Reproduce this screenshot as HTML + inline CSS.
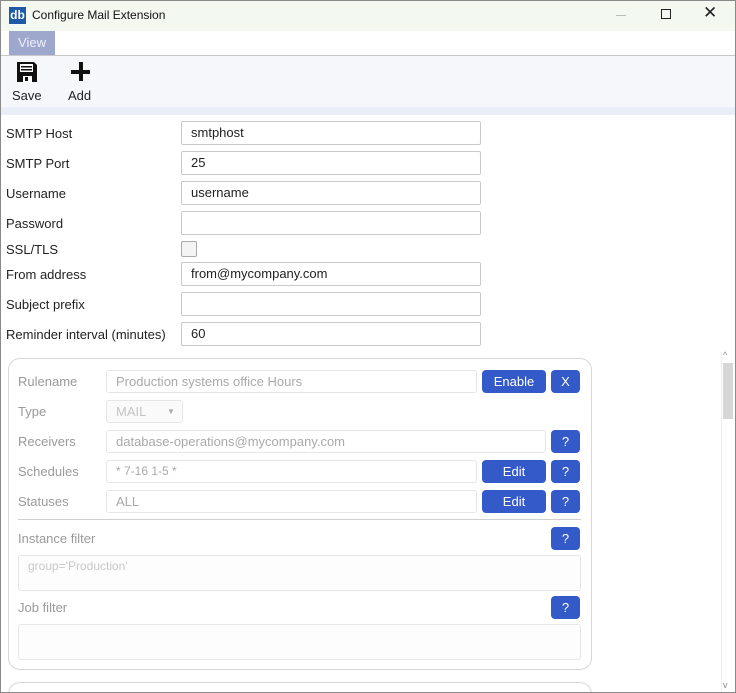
<!DOCTYPE html><html><head><style>
*{box-sizing:border-box;margin:0;padding:0}
html,body{width:736px;height:693px;overflow:hidden}
body{font-family:"Liberation Sans",sans-serif;font-size:13px;color:#222;background:#fff;position:relative}
.a{position:absolute}
.inp{position:absolute;border:1px solid #c9c9c9;border-radius:2px;background:#fff;padding-left:9px;line-height:22px;height:24px}
.lbl{position:absolute;left:6px}
.r{position:absolute;border:1px solid #e6e6e6;border-radius:3px;background:#fff;padding-left:9px;line-height:21px;height:23px;color:#a9a9a9}
.rl{position:absolute;left:18px;color:#9a9a9a}
.b{position:absolute;background:#3459c8;color:#fff;border-radius:4px;text-align:center;line-height:23px;height:23px}
</style></head><body>
<div class="a" style="left:0;top:0;width:736px;height:31px;background:#f3f8f1"></div>
<div class="a" style="left:9px;top:7px;width:17px;height:17px;background:#1e5aa8;color:#fff;font-size:12px;line-height:16px;text-align:center;font-weight:bold">db</div>
<div class="a" style="left:32px;top:8px;font-size:12px;color:#111">Configure Mail Extension</div>
<div class="a" style="left:616px;top:15px;width:10px;height:1px;background:#bbb"></div>
<div class="a" style="left:661px;top:9px;width:10px;height:10px;border:1px solid #222"></div>
<div class="a" style="left:703px;top:3px;font-size:17px;color:#222">✕</div>
<div class="a" style="left:0;top:31px;width:736px;height:24px;background:#fff"></div>
<div class="a" style="left:9px;top:31px;width:46px;height:24px;background:#9ea8cd;color:#eef;line-height:24px;text-align:center">View</div>
<div class="a" style="left:0;top:55px;width:736px;height:1px;background:#c8c8c8"></div>
<div class="a" style="left:0;top:56px;width:736px;height:51px;background:#f6f7fb"></div>
<div class="a" style="left:0;top:107px;width:736px;height:8px;background:#e9eef8"></div>
<svg class="a" style="left:17px;top:62px" width="20" height="20" viewBox="0 0 20 20"><path d="M0 0h17l3 3v17H0z" fill="#111"/><rect x="3" y="2" width="13" height="8" fill="#fff"/><rect x="4" y="4" width="11" height="1.5" fill="#111"/><rect x="4" y="7" width="11" height="1.5" fill="#111"/><rect x="6" y="14" width="9" height="6" fill="#fff"/><rect x="8" y="15" width="3" height="4" fill="#111"/></svg>
<div class="a" style="left:12px;top:88px">Save</div>
<div class="a" style="left:71px;top:70px;width:19px;height:4px;background:#111"></div>
<div class="a" style="left:79px;top:62px;width:4px;height:19px;background:#111"></div>
<div class="a" style="left:68px;top:88px">Add</div>

<div class="lbl" style="top:126px">SMTP Host</div><div class="inp" style="left:181px;top:121px;width:300px">smtphost</div>
<div class="lbl" style="top:156px">SMTP Port</div><div class="inp" style="left:181px;top:151px;width:300px">25</div>
<div class="lbl" style="top:186px">Username</div><div class="inp" style="left:181px;top:181px;width:300px">username</div>
<div class="lbl" style="top:216px">Password</div><div class="inp" style="left:181px;top:211px;width:300px"></div>
<div class="lbl" style="top:242px">SSL/TLS</div><div class="a" style="left:181px;top:241px;width:16px;height:16px;border:1px solid #aaa;border-radius:2px;background:#f4f4f4"></div>
<div class="lbl" style="top:267px">From address</div><div class="inp" style="left:181px;top:262px;width:300px">from@mycompany.com</div>
<div class="lbl" style="top:297px">Subject prefix</div><div class="inp" style="left:181px;top:292px;width:300px"></div>
<div class="lbl" style="top:327px">Reminder interval (minutes)</div><div class="inp" style="left:181px;top:322px;width:300px">60</div>

<div class="a" style="left:8px;top:358px;width:584px;height:312px;border:1px solid #d6d6d6;border-radius:12px"></div>
<div class="a" style="left:8px;top:682px;width:584px;height:30px;border:1px solid #d6d6d6;border-radius:12px"></div>
<div class="rl" style="top:374px">Rulename</div><div class="r" style="left:106px;top:370px;width:371px">Production systems office Hours</div>
<div class="b" style="left:482px;top:370px;width:64px">Enable</div><div class="b" style="left:551px;top:370px;width:29px">X</div>
<div class="rl" style="top:404px">Type</div><div class="r" style="left:106px;top:400px;width:77px;background:#fafafa;color:#c4c4c4">MAIL<span style="position:absolute;left:60px;top:0;font-size:8px;color:#aaa">▼</span></div>
<div class="rl" style="top:434px">Receivers</div><div class="r" style="left:106px;top:430px;width:440px">database-operations@mycompany.com</div><div class="b" style="left:551px;top:430px;width:29px">?</div>
<div class="rl" style="top:464px">Schedules</div><div class="r" style="left:106px;top:460px;width:371px;font-size:12px">* 7-16 1-5 *</div>
<div class="b" style="left:482px;top:460px;width:64px">Edit</div><div class="b" style="left:551px;top:460px;width:29px">?</div>
<div class="rl" style="top:494px">Statuses</div><div class="r" style="left:106px;top:490px;width:371px">ALL</div>
<div class="b" style="left:482px;top:490px;width:64px">Edit</div><div class="b" style="left:551px;top:490px;width:29px">?</div>
<div class="a" style="left:18px;top:519px;width:563px;height:1px;background:#cfcfcf"></div>
<div class="rl" style="top:531px">Instance filter</div><div class="b" style="left:551px;top:527px;width:29px">?</div>
<div class="r" style="left:18px;top:555px;width:563px;height:36px;background:#fdfdfd;font-size:12px;color:#c8c8c8">group='Production'</div>
<div class="rl" style="top:600px">Job filter</div><div class="b" style="left:551px;top:596px;width:29px">?</div>
<div class="r" style="left:18px;top:624px;width:563px;height:36px;background:#fdfdfd"></div>

<div class="a" style="left:721px;top:352px;width:13px;height:340px;background:#fff;border-left:1px solid #eee"></div>
<div class="a" style="left:723px;top:363px;width:10px;height:56px;background:#d6d6d6"></div>
<div class="a" style="left:723px;top:350px;font-size:9px;color:#888">^</div>
<div class="a" style="left:723px;top:680px;font-size:9px;color:#888">v</div>
<div class="a" style="left:0;top:0;width:736px;height:693px;border:1px solid #8a8a8a"></div>
</body></html>
